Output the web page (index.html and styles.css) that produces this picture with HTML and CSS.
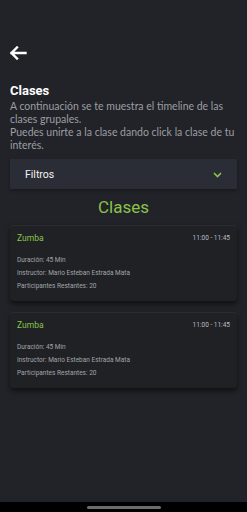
FILE: index.html
```html
<!DOCTYPE html>
<html>
<head>
<meta charset="utf-8">
<link rel="stylesheet" href="styles.css">
</head>
<body>
<div class="screen">
  <main class="content">
    <button class="back" aria-label="Volver">
      <svg width="18" height="14" viewBox="0 0 18 14"><path d="M16.5 7H2.5M8 1.5L2.5 7L8 12.5" fill="none" stroke="#ffffff" stroke-width="2.4" stroke-linecap="square"/></svg>
    </button>
    <h1 class="title">Clases</h1>
    <p class="desc">A continuación se te muestra el timeline de las clases grupales.<br>Puedes unirte a la clase dando click la clase de tu interés.</p>
    <div class="filter">
      <span>Filtros</span>
      <svg width="9" height="6" viewBox="0 0 9 6"><path d="M1 1L4.5 4.5L8 1" fill="none" stroke="#8bc34a" stroke-width="1.6"/></svg>
    </div>
    <h2 class="section">Clases</h2>
    <div class="list">
      <div class="card">
        <div class="card-head"><span class="name">Zumba</span><span class="time">11:00 - 11:45</span></div>
        <div class="info">Duración: 45 Min</div>
        <div class="info">Instructor: Mario Esteban Estrada Mata</div>
        <div class="info">Participantes Restantes: 20</div>
      </div>
      <div class="card">
        <div class="card-head"><span class="name">Zumba</span><span class="time">11:00 - 11:45</span></div>
        <div class="info">Duración: 45 Min</div>
        <div class="info">Instructor: Mario Esteban Estrada Mata</div>
        <div class="info">Participantes Restantes: 20</div>
      </div>
    </div>
  </main>
  <div class="navbar"><div class="pill"></div></div>
</div>
</body>
</html>
```
FILE: styles.css
```css
* { box-sizing: border-box; }
html, body { margin: 0; padding: 0; }
body {
  background: #212328;
  font-family: Roboto, "Noto Sans", sans-serif;
  width: 247px;
  height: 512px;
  overflow: hidden;
}
.screen {
  height: 512px;
  display: flex;
  flex-direction: column;
}
.content {
  flex: 1;
  padding: 44px 10px 0 10px;
  display: flex;
  flex-direction: column;
}
.back {
  background: none;
  border: 0;
  padding: 0;
  width: 18px;
  height: 18px;
  display: flex;
  align-items: center;
  justify-content: flex-start;
  margin-left: -1px;
}
.title {
  margin: 21px 0 0 0;
  font-size: 13px;
  line-height: 15px;
  font-weight: 700;
  color: #ffffff;
}
.desc {
  margin: 2px -2px 0 0;
  font-family: Lato, Roboto, sans-serif;
  font-size: 10.5px;
  line-height: 13px;
  color: #9c9ea3;
}
.filter {
  margin-top: 7px;
  height: 30px;
  background: #2b2d36;
  display: flex;
  align-items: center;
  justify-content: space-between;
  padding: 0 15px 0 15px;
  font-size: 10.5px;
  color: #f2f2f2;
  box-shadow: 0 2px 3px rgba(0,0,0,0.25);
}
.filter svg { margin-top: 2px; }
.section {
  margin: 8px 0 0 0;
  text-align: center;
  font-size: 17px;
  line-height: 20px;
  font-weight: 400;
  color: #8bc34a;
}
.list {
  margin-top: 8px;
  display: flex;
  flex-direction: column;
  gap: 11px;
}
.card {
  height: 76px;
  background: #1f2125;
  border-top: 1px solid #2a2c31;
  border-radius: 4px;
  box-shadow: 0 3px 5px rgba(0,0,0,0.55);
  padding: 6px 7px 0 7px;
}
.card-head {
  display: flex;
  justify-content: space-between;
  align-items: center;
  height: 12px;
  margin-bottom: 10px;
}
.name {
  font-size: 8.5px;
  color: #8bc34a;
}
.time {
  font-size: 6.5px;
  color: #bcbdc0;
}
.info {
  font-size: 6.5px;
  line-height: 13px;
  color: #a3a5aa;
}
.navbar {
  height: 10px;
  background: #000000;
  display: flex;
  justify-content: center;
  align-items: center;
}
.pill {
  width: 74px;
  height: 3px;
  border-radius: 2px;
  background: #6c6c6c;
}
```
